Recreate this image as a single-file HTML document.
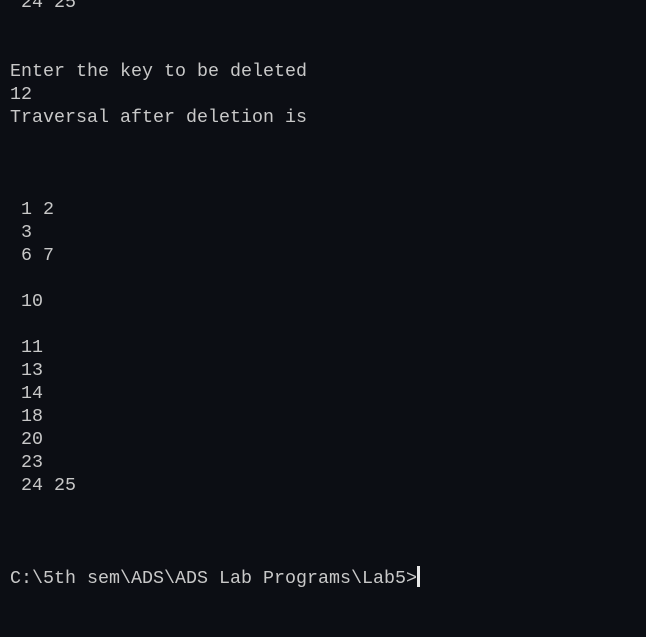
<!DOCTYPE html>
<html><head><style>
html,body{margin:0;padding:0;background:#0c0e14;width:646px;height:637px;overflow:hidden}
pre{position:absolute;left:10px;top:-9px;margin:0;font-family:"Liberation Mono",monospace;font-size:18.33px;line-height:23px;color:#c8c8c8}
.c{display:inline-block;width:3px;height:21px;background:#e8e8e8;vertical-align:-4px}
</style></head><body>
<pre> 24 25


Enter the key to be deleted
12
Traversal after deletion is



 1 2
 3
 6 7

 10

 11
 13
 14
 18
 20
 23
 24 25



C:\5th sem\ADS\ADS Lab Programs\Lab5&gt;<span class="c"></span></pre>
</body></html>
